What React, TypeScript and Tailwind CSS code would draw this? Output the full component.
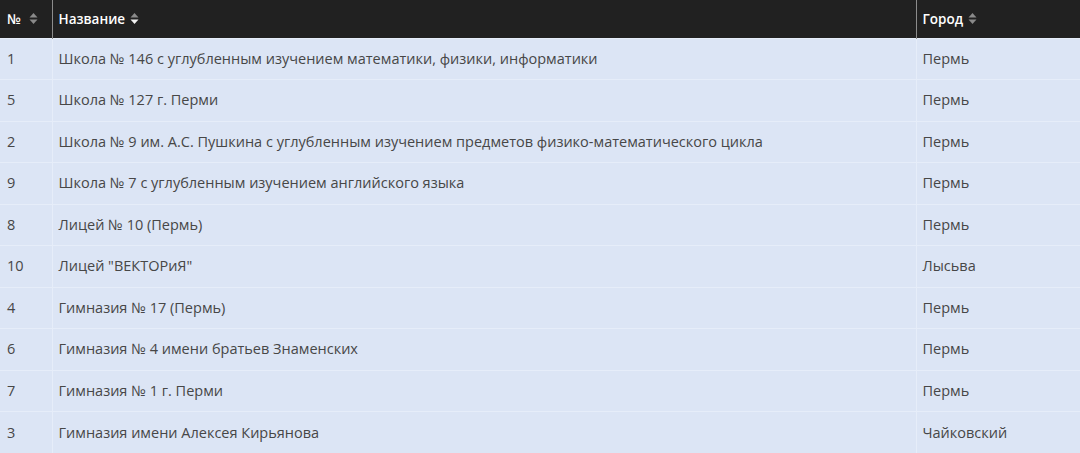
const rows = [
  ["1", "Школа № 146 с углубленным изучением математики, физики, информатики", "Пермь"],
  ["5", "Школа № 127 г. Перми", "Пермь"],
  ["2", "Школа № 9 им. А.С. Пушкина с углубленным изучением предметов физико-математического цикла", "Пермь"],
  ["9", "Школа № 7 с углубленным изучением английского языка", "Пермь"],
  ["8", "Лицей № 10 (Пермь)", "Пермь"],
  ["10", "Лицей \"ВЕКТОРиЯ\"", "Лысьва"],
  ["4", "Гимназия № 17 (Пермь)", "Пермь"],
  ["6", "Гимназия № 4 имени братьев Знаменских", "Пермь"],
  ["7", "Гимназия № 1 г. Перми", "Пермь"],
  ["3", "Гимназия имени Алексея Кирьянова", "Чайковский"],
];

function SortIcon({ active = false, wide = false }: { active?: boolean; wide?: boolean }) {
  return (
    <svg width="9" height="13" viewBox="0 0 9 13" className={wide ? "ml-[8px] inline-block" : "ml-[5px] inline-block"}>
      <path d="M4.5 1 L8.5 5.5 H0.5 Z" fill="#8a8a8a" />
      <path d="M4.5 12 L8.5 7.5 H0.5 Z" fill={active ? "#f2f2f2" : "#8a8a8a"} />
    </svg>
  );
}

export default function App() {
  return (
    <div className="w-[1080px] h-[453px] overflow-hidden bg-[#dce5f5] font-['Open_Sans',sans-serif]">
      <table className="w-full border-collapse text-[14.5px] font-medium text-[#474747]">
        <thead>
          <tr className="h-[38px] bg-[#212121] text-[13.5px] text-white">
            <th className="w-[52px] border-r border-[#8c8c8c] pl-[7px] text-left font-semibold">
              <span className="flex items-center">№<SortIcon wide /></span>
            </th>
            <th className="w-[864px] border-r border-[#8c8c8c] pl-[6px] text-left font-semibold">
              <span className="flex items-center">Название<SortIcon active /></span>
            </th>
            <th className="pl-[6px] text-left font-semibold">
              <span className="flex items-center">Город<SortIcon /></span>
            </th>
          </tr>
        </thead>
        <tbody>
          {rows.map(([n, name, city]) => (
            <tr key={n} className="h-[41.5px] border-t border-[#e6edf9]">
              <td className="border-r border-[#e6edf9] pl-[7px]">{n}</td>
              <td className="border-r border-[#e6edf9] pl-[6px]">{name}</td>
              <td className="pl-[6px]">{city}</td>
            </tr>
          ))}
        </tbody>
      </table>
    </div>
  );
}
